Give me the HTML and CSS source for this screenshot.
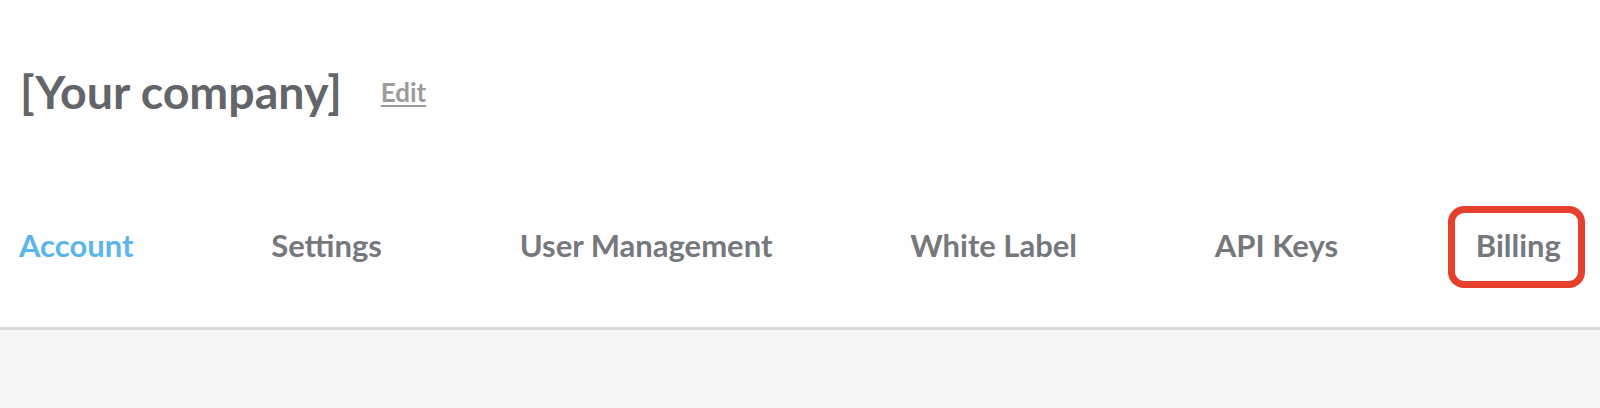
FILE: index.html
```html
<!DOCTYPE html>
<html lang="en">
<head>
    <meta charset="UTF-8">
    <meta name="viewport" content="width=device-width, initial-scale=1.0">
    <title>Account</title>
    <link rel="stylesheet" href="styles.css">
</head>
<body>
    <!-- Cabecera de la cuenta -->
    <header class="account-header">
        <div class="company-row">
            <h1 class="company-name">[Your company]</h1>
            <a href="#" class="edit-link">Edit</a>
        </div>

        <nav class="tabs">
            <a href="#" class="tab active">Account</a>
            <a href="#" class="tab">Settings</a>
            <a href="#" class="tab">User Management</a>
            <a href="#" class="tab">White Label</a>
            <a href="#" class="tab">API Keys</a>
            <a href="#" class="tab highlighted">Billing</a>
        </nav>
    </header>

    <main class="content"></main>
</body>
</html>
```

FILE: styles.css
```css
/* Estilos de la página de cuenta */
html, body {
    height: 100%;
}

body {
    font-family: Lato, "Open Sans", Arial, sans-serif;
    margin: 0;
    padding: 0;
    background-color: #f5f5f5;
    display: flex;
    flex-direction: column;
}

.account-header {
    background-color: #fff;
    border-bottom: 3px solid #d9d9d9;
    padding: 64px 0 63px;
}

.company-row {
    display: flex;
    align-items: center;
    gap: 39px;
    padding-left: 20px;
}

.company-name {
    margin: 0;
    font-size: 46.5px;
    font-weight: 700;
    line-height: 55px;
    color: #626569;
}

.edit-link {
    font-size: 26px;
    font-weight: 700;
    color: #9b9b9b;
    text-decoration: underline;
    text-underline-offset: 3px;
    text-decoration-thickness: 2px;
}

.tabs {
    display: flex;
    justify-content: space-between;
    padding: 0 39px 0 19px;
    margin-top: 108px;
}

.tab {
    font-size: 31px;
    font-weight: 700;
    line-height: 37px;
    color: #75787c;
    text-decoration: none;
}

.tab.active {
    color: #5bb6ea;
}

.tab.highlighted {
    position: relative;
}

/* Marco rojo que resalta la pestaña */
.tab.highlighted::after {
    content: "";
    position: absolute;
    top: -21px;
    bottom: -24px;
    left: -28px;
    right: -24px;
    border: 7px solid #e63f2b;
    border-radius: 16px;
}

.content {
    flex: 1;
}
```
